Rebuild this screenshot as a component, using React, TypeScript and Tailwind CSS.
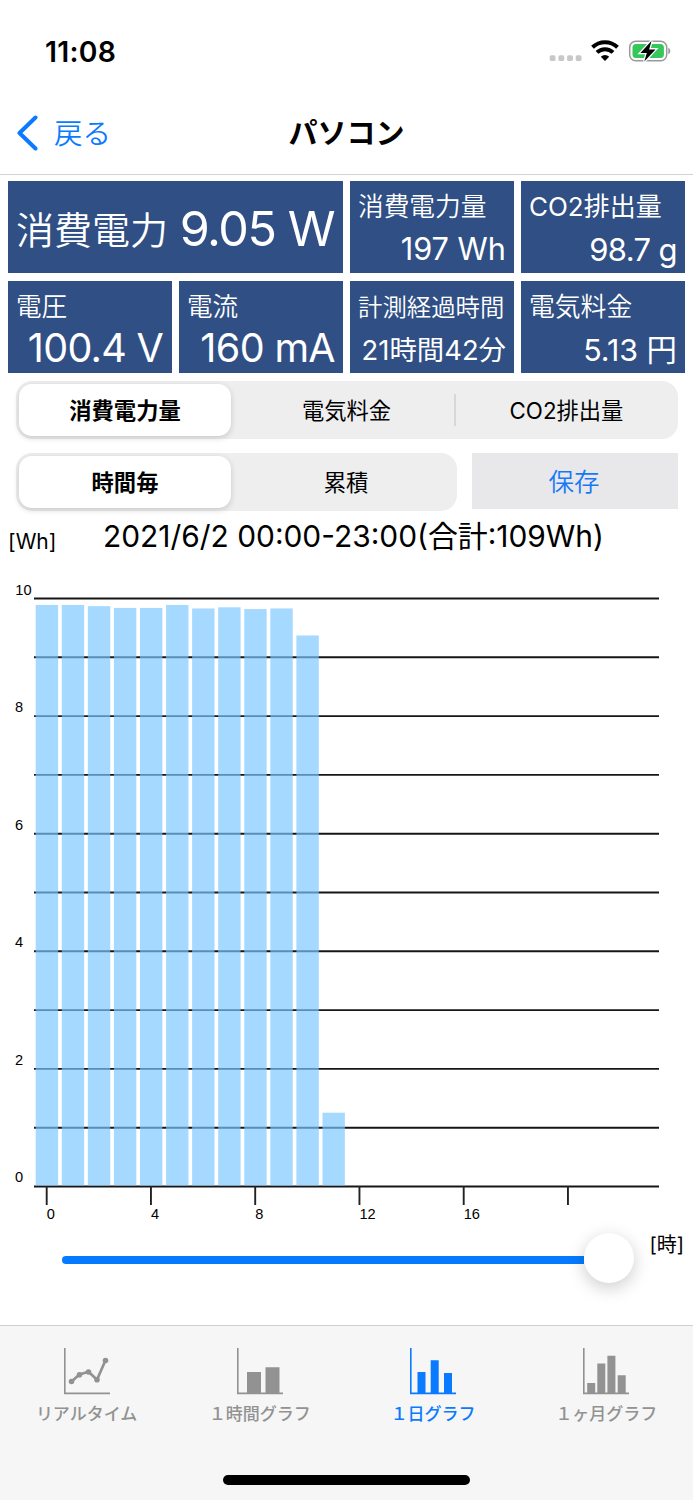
import { useState } from 'react';

interface Tile {
  label: string;
  value: string;
  labelClass: string;
  valueClass: string;
}

interface SegmentProps {
  items: string[];
  selected: number;
  onSelect: (index: number) => void;
  className: string;
}

const tiles: Tile[] = [
  { label: '消費電力量', value: '197 Wh', labelClass: 'text-[25.7px] font-[350]', valueClass: 'text-[30.7px] pt-px' },
  { label: 'CO2排出量', value: '98.7 g', labelClass: 'text-[26px]', valueClass: 'text-[31px] tracking-[-0.02em] pt-px' },
  { label: '電圧', value: '100.4 V', labelClass: 'text-[25.6px] font-[350]', valueClass: 'text-[39.5px] tracking-[-0.018em] mr-px' },
  { label: '電流', value: '160 mA', labelClass: 'text-[25.6px] font-[350]', valueClass: 'text-[39.5px] tracking-[-0.016em]' },
  { label: '計測経過時間', value: '21時間42分', labelClass: 'text-[24.4px] font-[350]', valueClass: 'text-[27.4px] pt-[3px]' },
  { label: '電気料金', value: '5.13 円', labelClass: 'text-[25.8px] font-[350]', valueClass: 'text-[30.4px] pt-[2px]' },
];

const hourly = [9.89, 9.89, 9.87, 9.84, 9.84, 9.89, 9.83, 9.85, 9.82, 9.83, 9.37, 1.24];

const TileCard = ({ label, value, labelClass, valueClass }: Tile) => (
  <div className="flex h-[92px] flex-col bg-[#304f84] px-2 pt-[6px] text-white">
    <div className={`flex h-10 items-center whitespace-nowrap leading-none ${labelClass}`}>{label}</div>
    <div className={`flex h-[44px] items-center justify-end whitespace-nowrap leading-none ${valueClass}`}>{value}</div>
  </div>
);

const Segment = ({ items, selected, onSelect, className }: SegmentProps) => (
  <div className={`flex h-[58px] rounded-[16px] bg-[#eeeeef] p-[3px] ${className}`}>
    {items.map((item, i) => (
      <button
        key={item}
        onClick={() => onSelect(i)}
        className={`flex items-center justify-center whitespace-nowrap pt-[2px] text-[22.3px] leading-none ${
          i === selected
            ? 'mr-[7px] w-[212px] rounded-[13px] bg-white font-semibold shadow-[0_2px_6px_rgba(0,0,0,0.16)]'
            : i > selected + 1
              ? 'relative flex-1 pl-[3px] before:absolute before:-left-px before:top-[10px] before:h-8 before:w-[2px] before:bg-[#d8d8dc]'
              : 'flex-1'
        }`}
      >
        {item}
      </button>
    ))}
  </div>
);

const StatusIcons = () => (
  <svg width="124" height="26" viewBox="0 0 124 26" fill="none">
    {[0, 8.7, 17.4, 26].map((x) => (
      <rect key={x} x={1.7 + x} y="17.2" width="5.8" height="5.8" rx="1.6" fill="#c8c8c8" />
    ))}
    <g stroke="#000" strokeWidth="4">
      <path d="M44.5 9.2a18 18 0 0 1 25 0" />
      <path d="M49 14.4a11.5 11.5 0 0 1 16 0" />
    </g>
    <path d="M57 23l-4.2-4.3a6 6 0 0 1 8.4 0z" fill="#000" />
    <rect x="81.7" y="3.2" width="37" height="19.6" rx="6" stroke="#999" strokeWidth="1.5" />
    <path d="M120.3 9.8c2.6.8 2.6 5.6 0 6.4z" fill="#999" />
    <rect x="84.5" y="6" width="31.4" height="14" rx="3.5" fill="#35c759" />
    <path d="M103.6 2.8l-11.2 12.1h6.4l-2.5 8.6 11.2-12.1h-6.4z" fill="#000" stroke="#fff" strokeWidth="2.6" paintOrder="stroke" />
  </svg>
);

const HourlyChart = () => (
  <svg className="block shrink-0" width="693" height="660" viewBox="0 570 693 660" fontFamily="Liberation Sans, Arial, sans-serif" fontSize="14.6">
    {Array.from({ length: 11 }, (_, i) => (
      <line key={i} x1="34" x2="659" y1={598.5 + i * 58.8} y2={598.5 + i * 58.8} stroke="#161616" strokeWidth="1.9" />
    ))}
    {hourly.map((wh, i) => (
      <rect key={i} x={35.7 + i * 26.07} y={1185.5 - wh * 58.7} width="22.4" height={wh * 58.7} fill="#7cc7ff" fillOpacity="0.68" />
    ))}
    {[10, 8, 6, 4, 2, 0].map((n, i) => (
      <text key={n} x={n === 10 ? 15.3 : 15} y={594.5 + i * 117.5}>{n}</text>
    ))}
    {['0', '4', '8', '12', '16', ''].map((n, i) => (
      <g key={i}>
        <line x1={46.7 + i * 104.25} x2={46.7 + i * 104.25} y1="1186" y2="1205" stroke="#222" strokeWidth="1.9" />
        <text x={46.7 + i * 104.25} y="1219">{n}</text>
      </g>
    ))}
  </svg>
);

const tabs = [
  {
    label: 'リアルタイム',
    icon: (
      <>
        <path d="M7.5 33.5l8-7 9-2.7 8.5 8 8.5-19.5" fill="none" stroke="currentColor" strokeWidth="2.7" />
        {[[7.5, 33.5], [15.5, 26.7], [24.5, 24], [33, 31.8], [41.5, 12.5]].map(([x, y]) => (
          <circle key={x} cx={x} cy={y} r="2.8" />
        ))}
      </>
    ),
  },
  { label: '１時間グラフ', icon: <path d="M10 24h14v22H10zM28.5 19.3h14V46h-14z" /> },
  { label: '１日グラフ', icon: <path d="M7.5 24h8v22h-8zM20.7 12.3h8V46h-8zM34 25h8v21h-8z" /> },
  { label: '１ヶ月グラフ', icon: <path d="M4.2 35h8v11h-8zM14.3 15.5h8V46h-8zM24.4 7.8h8V46h-8zM34.7 27.2h8V46h-8z" /> },
];

const App = () => {
  const [metric, setMetric] = useState(0);
  const [mode, setMode] = useState(0);
  const [tab, setTab] = useState(2);

  return (
    <div className="flex h-[1500px] w-[693px] flex-col overflow-hidden bg-white font-[Inter,'Noto_Sans_CJK_JP',sans-serif] text-black">
      <div className="flex h-[92px] shrink-0 items-center justify-between pl-[45px] pr-[21px] pt-[10px]">
        <span className="pt-[2px] text-[28.3px] font-semibold leading-none tracking-[0.01em]">11:08</span>
        <StatusIcons />
      </div>

      <header className="grid h-[83px] shrink-0 grid-cols-3 items-center border-b border-[#d0d3d8]">
        <button className="flex items-center gap-4 pl-4 text-[28.5px] leading-none text-[#0a7aff]">
          <svg width="22" height="36" viewBox="0 0 22 36" fill="none">
            <path d="M19.5 2.5L3.5 18l16 15.5" stroke="currentColor" strokeWidth="4" strokeLinecap="round" strokeLinejoin="round" />
          </svg>
          <span className="pt-[2px] font-[350]">戻る</span>
        </button>
        <h1 className="pt-px text-center text-[29px] font-semibold leading-none">パソコン</h1>
      </header>

      <div className="grid shrink-0 grid-cols-4 gap-x-[7px] gap-y-2 px-2 pt-[6px]">
        <div className="col-span-2 flex h-[92px] items-center justify-between whitespace-nowrap bg-[#304f84] pl-2 pr-[9px] pt-[5px] leading-none text-white">
          <span className="text-[38px] font-[350]">消費電力</span>
          <span className="text-[48.5px] tracking-[-0.03em]">9.05 W</span>
        </div>
        {tiles.map((tile) => (
          <TileCard key={tile.label} {...tile} />
        ))}
      </div>

      <div className="flex shrink-0 flex-col gap-[14px] pl-4 pr-[15px] pt-2">
        <Segment items={['消費電力量', '電気料金', 'CO2排出量']} selected={metric} onSelect={setMetric} className="w-full" />
        <div className="flex items-center justify-between">
          <Segment items={['時間毎', '累積']} selected={mode} onSelect={setMode} className="w-[441px]" />
          <button className="mb-[2px] flex h-14 w-[206px] items-center justify-center bg-[#e8e8eb] pr-[2px] pt-[2px] text-[25.5px] font-[350] leading-none text-[#1878f5]">保存</button>
        </div>
      </div>

      <div className="flex h-[59px] shrink-0 whitespace-nowrap pl-2 leading-none">
        <span className="w-[95px] pt-5 text-[21px]">[Wh]</span>
        <h2 className="pt-[11px] text-[29.9px]">2021/6/2 00:00-23:00(合計:109Wh)</h2>
      </div>

      <HourlyChart />

      <div className="flex h-[95px] shrink-0 items-start pl-[62px] pr-[9px]">
        <div className="flex h-14 w-[572px] items-center">
          <div className="mt-1 h-[7.5px] flex-1 rounded-l-full bg-[#057aff]" />
          <div className="size-[50px] rounded-full bg-white shadow-[0_5px_18px_rgba(0,0,0,0.2)]" />
        </div>
        <span className="ml-auto pt-[5px] text-[20px] leading-none">[時]</span>
      </div>

      <nav className="flex h-[175px] shrink-0 flex-col items-center justify-between border-t border-[#cfcfcf] bg-[#f6f6f6] pb-[15px] pt-[22px]">
        <div className="grid w-full grid-cols-4">
          {tabs.map(({ label, icon }, i) => (
            <button
              key={label}
              onClick={() => setTab(i)}
              className={`flex flex-col items-center gap-[11px] ${i === tab ? 'text-[#0a7aff]' : 'text-[#929292]'}`}
            >
              <svg width="46" height="47" viewBox="0 0 46 47" fill="currentColor">
                <path d="M.8 0v45.4H46" fill="none" stroke="currentColor" strokeWidth="1.6" />
                {icon}
              </svg>
              <span className="whitespace-nowrap text-[17px] font-medium leading-none">{label}</span>
            </button>
          ))}
        </div>
        <div className="h-[10px] w-[247px] rounded-full bg-black" />
      </nav>
    </div>
  );
};

export default App;
